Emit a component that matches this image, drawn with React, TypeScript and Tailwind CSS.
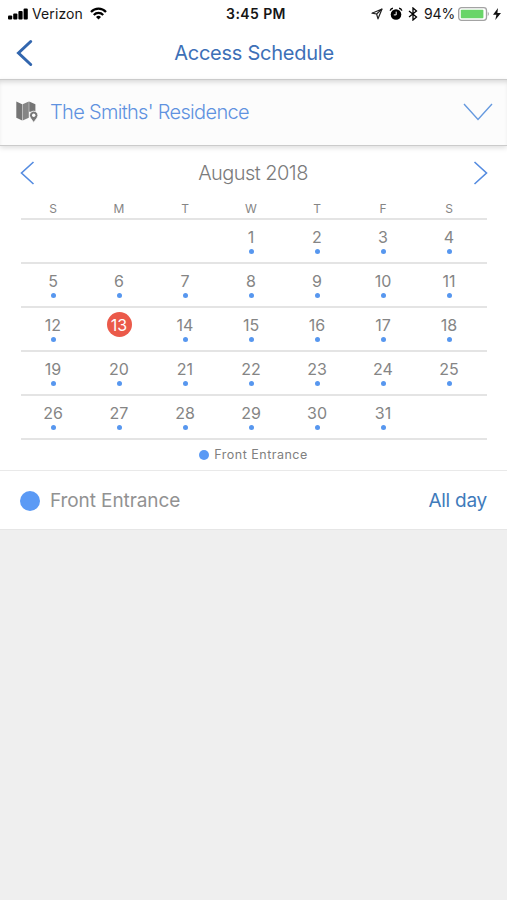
import { clsx } from "clsx";

const WEEKDAYS = ["S", "M", "T", "W", "T", "F", "S"];
const TODAY = 13;
const DAYS_IN_MONTH = 31;
const FIRST_WEEKDAY = 3;

const weeks = Array.from({ length: 5 }, (_, week) =>
  Array.from({ length: 7 }, (_, weekday) => {
    const day = week * 7 + weekday - FIRST_WEEKDAY + 1;
    return day >= 1 && day <= DAYS_IN_MONTH ? day : null;
  })
);

function StatusBar() {
  return (
    <div className="grid h-[27px] grid-cols-[1fr_auto_1fr] items-center pl-2 pr-[5px] text-sm leading-5 text-[#161616]">
      <div className="flex items-center">
        {/* Signal */}
        <svg width="20" height="12" viewBox="0 0 20 12" fill="#000">
          <rect x="0" y="7.5" width="4.2" height="4" rx="1" />
          <rect x="5.2" y="5.5" width="4.2" height="6" rx="1" />
          <rect x="10.4" y="3" width="4.2" height="8.5" rx="1" />
          <rect x="15.6" y="0.5" width="4.2" height="11" rx="1" />
        </svg>
        <span className="ml-1 tracking-[0.1px]">Verizon</span>
        {/* Wifi */}
        <svg className="ml-[7px]" width="17" height="13" viewBox="0 0 17 13" fill="none" stroke="#000" strokeWidth="2.2">
          <path d="M1 5C5.2 .5 11.8 .5 16 5" />
          <path d="M3.8 7.9C6.4 5.1 10.6 5.1 13.2 7.9" />
          <path d="M6 9.9Q8.5 7.8 11 9.9L8.5 12.4Z" fill="#000" stroke="none" />
        </svg>
      </div>
      <span className="pl-0.5 text-sm font-semibold tracking-[0.4px]">3:45 PM</span>
      <div className="flex items-center justify-end">
        {/* Location */}
        <svg width="12" height="12" viewBox="0 0 12 12" fill="none" stroke="#222" strokeWidth="1.2" strokeLinejoin="round">
          <path d="M11 1L1 5.2L5.6 6L7 10.8Z" />
          <path d="M11 1L5.6 6" />
        </svg>
        {/* Alarm */}
        <svg className="ml-[6px]" width="14" height="14" viewBox="0 0 14 14" fill="none">
          <circle cx="7" cy="7.5" r="5.3" fill="#000" />
          <path d="M1.2 3.6Q1.7 1.6 3.9 1.3M12.8 3.6Q12.3 1.6 10.1 1.3" stroke="#000" strokeWidth="1.5" />
          <path d="M7.2 4.6V7.9H4.8" stroke="#fff" strokeWidth="1" />
        </svg>
        {/* Bluetooth */}
        <svg className="ml-[5px]" width="10" height="14" viewBox="0 0 10 14" fill="none" stroke="#000" strokeWidth="1.3">
          <path d="M1 4L8.5 10L5 13V1L8.5 4L1 10" />
        </svg>
        <span className="ml-[6px] tracking-[-0.15px]">94%</span>
        {/* Battery */}
        <svg className="ml-[3px]" width="32" height="14" viewBox="0 0 32 14">
          <rect x="0.7" y="0.7" width="27.8" height="12.6" rx="2.8" fill="#fff" stroke="#a3a3a3" strokeWidth="1.3" />
          <rect x="2.8" y="2.7" width="22.6" height="8.6" rx="0.8" fill="#69d568" />
          <path d="M29.8 4.8Q31.8 7 29.8 9.2Z" fill="#999" />
        </svg>
        <svg className="ml-[3px] mr-px" width="8" height="12" viewBox="0 0 8 12" fill="#111">
          <path d="M5 0L0 6.8H3.4L2.3 12L8 4.9H4.4Z" />
        </svg>
      </div>
    </div>
  );
}

function MapPinIcon() {
  return (
    <svg width="23" height="22" viewBox="0 0 23 22">
      <path d="M0.3 0.6L6.2 3.2V19.4L0.3 16.8Z" fill="#757575" />
      <path d="M6.6 3.2L12.8 0.6V16.8L6.6 19.4Z" fill="#858585" />
      <path d="M13.2 0.6L19.4 3.2V10.8H13.2Z" fill="#757575" />
      <path
        d="M17.7 10.2A4.2 4.2 0 0 0 13.5 14.4C13.5 16.5 16 18.7 17.7 21.5C19.4 18.7 21.9 16.5 21.9 14.4A4.2 4.2 0 0 0 17.7 10.2Z"
        fill="#777"
        stroke="#fcfcfc"
        strokeWidth="0.8"
      />
      <circle cx="17.7" cy="14.2" r="1.7" fill="#fcfcfc" />
    </svg>
  );
}

function DayCell({ day }: { day: number | null }) {
  if (day === null) return <div />;
  const isToday = day === TODAY;

  return (
    <div className="flex flex-col items-center pt-1">
      <span
        className={clsx(
          "flex size-[25px] items-center justify-center rounded-full text-base leading-none",
          isToday ? "bg-[#eb5a4a] text-white" : "text-[#858585]"
        )}
      >
        {day}
      </span>
      {!isToday && <span className="size-[5px] rounded-full bg-[#5797ef]" />}
    </div>
  );
}

export default function App() {
  return (
    <div className="h-[900px] w-[507px] overflow-hidden bg-[#efefef] font-['Inter','Liberation_Sans',sans-serif]">
      <div className="bg-white">
        <StatusBar />

        {/* Title */}
        <header className="grid h-[52px] grid-cols-[1fr_auto_1fr] items-center px-4 pb-px">
          <svg width="17" height="28" viewBox="0 0 17 28" fill="none" stroke="#3266ae" strokeWidth="3">
            <path d="M14.7 2.5L2.5 14L14.7 25.5" strokeLinecap="round" />
          </svg>
          <h1 className="pl-px text-xl tracking-[-0.25px] text-[#3d70b7]">Access Schedule</h1>
          <div />
        </header>

        {/* Location picker */}
        <div className="flex h-[67px] items-center border-y border-[#cbcbcb] bg-[#fcfcfc] pb-0.5 pl-4 pr-3.5 shadow-[0_2px_5px_rgba(0,0,0,0.13),inset_0_4px_5px_-2px_rgba(0,0,0,0.15)]">
          <MapPinIcon />
          <span className="ml-[11px] text-xl font-light tracking-[-0.68px] text-[#5f92e0]">The Smiths' Residence</span>
          <svg className="ml-auto" width="30" height="18" viewBox="0 0 30 18" fill="none" stroke="#6599df" strokeWidth="1.4">
            <path d="M1 1L15 16.5L29 1" />
          </svg>
        </div>

        {/* Calendar */}
        <section className="h-[325px] border-b border-[#e9e9e9] pl-[21px] pr-5">
          <div className="-ml-px -mr-px flex h-[54px] items-center justify-between">
            <svg width="15" height="24" viewBox="0 0 15 24" fill="none" stroke="#548be0" strokeWidth="1.6">
              <path d="M13.5 1L1.5 12L13.5 23" />
            </svg>
            <h2 className="-ml-0.5 text-xl font-light tracking-[-0.55px] text-[#7b7b7b]">August 2018</h2>
            <svg width="15" height="24" viewBox="0 0 15 24" fill="none" stroke="#548be0" strokeWidth="1.6">
              <path d="M1.5 1L13.5 12L1.5 23" />
            </svg>
          </div>
          <div className="-ml-px grid h-[18px] grid-cols-[repeat(7,66px)] items-center text-center text-xs leading-none text-[#858585]">
            {WEEKDAYS.map((label, i) => (
              <span key={i}>{label}</span>
            ))}
          </div>
          <div className="border-b-2 border-[#e4e4e4]">
            {weeks.map((week, i) => (
              <div key={i} className="h-11 border-t-2 border-[#e4e4e4]">
                <div className="-ml-px grid grid-cols-[repeat(7,66px)]">
                  {week.map((day, j) => (
                    <DayCell key={j} day={day} />
                  ))}
                </div>
              </div>
            ))}
          </div>
          <div className="flex h-[30px] items-center justify-center gap-[5px] pr-px">
            <span className="size-2.5 rounded-full bg-[#5b9af5]" />
            <span className="pt-px text-[12.5px] tracking-[0.5px] text-[#808080]">Front Entrance</span>
          </div>
        </section>

        {/* Access entry */}
        <div className="flex h-[59px] items-center border-b border-[#e6e6e6] px-5 pt-px">
          <span className="size-5 rounded-full bg-[#5b9af5]" />
          <span className="ml-2.5 pt-0.5 text-[19px] tracking-[-0.1px] text-[#929292]">Front Entrance</span>
          <span className="ml-auto pt-0.5 text-[19px] tracking-[-0.25px] text-[#3f7bbb]">All day</span>
        </div>
      </div>
    </div>
  );
}
